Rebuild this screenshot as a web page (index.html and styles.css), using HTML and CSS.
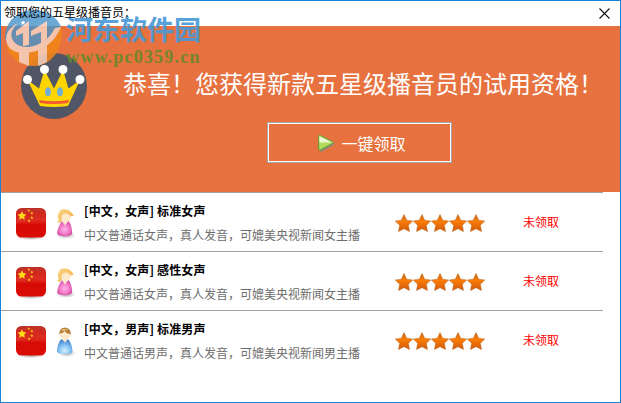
FILE: index.html
```
<!DOCTYPE html>
<html lang="zh-CN">
<head>
  <meta charset="UTF-8">
  <title>领取您的五星级播音员</title>
  <link rel="stylesheet" href="styles.css">
</head>
<body>
  <!-- shared icons -->
  <svg class="defs" width="0" height="0">
    <defs>
      <linearGradient id="red" x1="0" y1="0" x2="0" y2="1">
        <stop offset="0" stop-color="#b82a20"/><stop offset=".2" stop-color="#d01a12"/><stop offset=".48" stop-color="#de2318"/><stop offset=".56" stop-color="#d60b05"/><stop offset="1" stop-color="#dc0c06"/>
      </linearGradient>
      <linearGradient id="orange" x1="0" y1="0" x2="0" y2="1">
        <stop offset="0" stop-color="#c96510"/><stop offset=".4" stop-color="#fb7c07"/><stop offset="1" stop-color="#d0580a"/>
      </linearGradient>
      <radialGradient id="pink" cx=".5" cy=".55" r=".6">
        <stop offset="0" stop-color="#ffb4ec"/><stop offset=".5" stop-color="#f27fcb"/><stop offset="1" stop-color="#cf3e9a"/>
      </radialGradient>
      <radialGradient id="blue" cx=".5" cy=".75" r=".7">
        <stop offset="0" stop-color="#d8f1ff"/><stop offset=".5" stop-color="#86c3f4"/><stop offset="1" stop-color="#4384ce"/>
      </radialGradient>
      <linearGradient id="hair" x1="0" y1="0" x2="1" y2="1">
        <stop offset="0" stop-color="#fbd98a"/><stop offset="1" stop-color="#f2aa45"/>
      </linearGradient>
      <radialGradient id="shade">
        <stop offset="0" stop-color="#777" stop-opacity=".7"/><stop offset="1" stop-color="#999" stop-opacity="0"/>
      </radialGradient>
      <path id="star" d="M9 .5 11.7 6.2 17.7 7 13.4 11.3 14.5 17.6 9 14.7 3.5 17.6 4.6 11.3.3 7 6.3 6.2Z"/>
    </defs>
    <symbol id="flag" viewBox="0 0 32 34">
      <ellipse cx="16" cy="30.6" rx="14" ry="2.6" fill="url(#shade)"/>
      <rect x="1" y="1" width="30" height="29.5" rx="5.5" fill="url(#red)"/>
      <path d="M1.5 16C10 14 20 13 30.5 14V7Q30.500 1.500 25 1.500H7Q1.500 1.500 1.500 7Z" fill="#fff" opacity=".06"/>
      <use href="#star" transform="translate(2.500 4) scale(.5)" fill="#ffdb16"/>
      <g fill="#fbbd12">
        <use href="#star" transform="translate(12.300 2) scale(.16)"/>
        <use href="#star" transform="translate(15.300 4.500) scale(.17)"/>
        <use href="#star" transform="translate(15.300 9) scale(.17)"/>
        <use href="#star" transform="translate(12.500 12.200) scale(.18)"/>
      </g>
    </symbol>
    <symbol id="girl" viewBox="0 0 22 32">
      <ellipse cx="12" cy="27.500" rx="10" ry="3.500" fill="url(#shade)"/>
      <path d="M8 13C5 17 3 22 3.200 25.500 4 29.200 17 29.200 18.200 25.500 18.200 21 17 16 14.500 13Z" fill="url(#pink)"/>
      <path d="M7.500 12.500 11 17.500 14.700 12.500Z" fill="#ffe8cf"/>
      <ellipse cx="11.700" cy="8.500" rx="5.300" ry="5.500" fill="#ffe9cc"/>
      <path d="M6.500 2Q13-.5 17.500 4.500L20 7.500 16.500 8.500Q14 4.500 9.500 6 6.500 8 8 12L6 15 3 14Q6 12 4 10 3 6 6.500 2Z" fill="url(#hair)"/>
    </symbol>
    <symbol id="boy" viewBox="0 0 22 32">
      <ellipse cx="13" cy="27.500" rx="9" ry="3.500" fill="url(#shade)"/>
      <path d="M7.500 13Q11 16 14 13C17 16 18.500 22 18.500 25.500 17 29.200 4.500 29.200 3 25.500 3 21 5 15 7.500 13Z" fill="url(#blue)"/>
      <path d="M7.700 12.500 11 16.500 14.200 12.500Z" fill="#ffe8cf"/>
      <ellipse cx="11" cy="8.500" rx="5" ry="5.300" fill="#ffe9cc"/>
      <path d="M5.300 7Q6 1.600 11 1.500 17.300 1.800 17 10L16 7.500Q12.500 8.500 11 5 9 7 6 7.500L5.500 9Z" fill="#b07b32"/>
      <path d="M7 4Q11 1.500 15 4 11 3.500 9 5.500Z" fill="#dfb86e"/>
    </symbol>
    <symbol id="stars" viewBox="0 0 90 18">
      <g fill="url(#orange)" stroke="#b96a25" stroke-width=".5">
        <use href="#star"/>
        <use href="#star" x="18"/>
        <use href="#star" x="36"/>
        <use href="#star" x="54"/>
        <use href="#star" x="72"/>
      </g>
    </symbol>
  </svg>

  <div class="window">
    <header class="titlebar">
      <span class="caption">领取您的五星级播音员：</span>
      <svg class="close" width="11" height="11" viewBox="0 0 11 11"><path d="M.5.5 10.500 10.500M10.500.5.5 10.500" stroke="#111" stroke-width="1.100"/></svg>
    </header>

    <section class="banner">
      <svg class="crown" width="66" height="66" viewBox="0 0 66 66">
        <circle cx="33" cy="33" r="33" fill="#505665"/>
        <path d="M6.500 27 18 35.500 23.500 17 33 35.500 42 17 47.500 35.500 59 27 47 53Q33 55 19 53Z" fill="#ffd500"/>
        <path d="M18 47Q33 49.500 48 47L47 50Q33 52 19 50Z" fill="#f0582f"/>
        <g fill="#fff"><circle cx="6.500" cy="26.500" r="4.500"/><circle cx="23.500" cy="16.500" r="4.500"/><circle cx="42" cy="16.500" r="4.500"/><circle cx="59" cy="26.500" r="4.500"/></g>
        <g fill="#70afd5"><ellipse cx="27" cy="38.700" rx="2.900" ry="4.500"/><ellipse cx="39" cy="38.700" rx="2.900" ry="4.500"/></g>
      </svg>
      <div class="offer">
        <h1>恭喜！您获得新款五星级播音员的试用资格！</h1>
        <button class="claim">
          <svg width="18" height="18" viewBox="0 0 18 18">
            <path d="M2.500 2.500Q2.500.8 4 1.400L16 7.800Q17.500 9 16 10.200L4 16.900Q2.500 17.500 2.500 16Z" fill="#8b8d77" transform="translate(.5 .8)"/>
            <path d="M1.700 2.300Q1.700.7 3.200 1.400L15.300 7.600Q16.800 8.500 15.300 9.500L3.200 15.900Q1.700 16.500 1.700 15Z" fill="#b4dc5b" stroke="#659b31"/>
            <path d="M2.400 2.200 15 8.400H2.400Z" fill="#edf6d4"/>
          </svg>
          <span>一键领取</span>
        </button>
      </div>
    </section>

    <ul class="voices">
      <li class="voice">
        <svg class="flag" width="32" height="34"><use href="#flag"/></svg>
        <svg class="person" width="22" height="32"><use href="#girl"/></svg>
        <div class="info"><b>[中文，女声] 标准女声</b><p>中文普通话女声，真人发音，可媲美央视新闻女主播</p></div>
        <svg class="stars" width="90" height="18"><use href="#stars"/></svg>
        <span class="status">未领取</span>
      </li>
      <li class="voice">
        <svg class="flag" width="32" height="34"><use href="#flag"/></svg>
        <svg class="person" width="22" height="32"><use href="#girl"/></svg>
        <div class="info"><b>[中文，女声] 感性女声</b><p>中文普通话女声，真人发音，可媲美央视新闻女主播</p></div>
        <svg class="stars" width="90" height="18"><use href="#stars"/></svg>
        <span class="status">未领取</span>
      </li>
      <li class="voice">
        <svg class="flag" width="32" height="34"><use href="#flag"/></svg>
        <svg class="person" width="22" height="32"><use href="#boy"/></svg>
        <div class="info"><b>[中文，男声] 标准男声</b><p>中文普通话男声，真人发音，可媲美央视新闻男主播</p></div>
        <svg class="stars" width="90" height="18"><use href="#stars"/></svg>
        <span class="status">未领取</span>
      </li>
    </ul>

    <div class="watermark">
      <svg width="58" height="58" viewBox="0 0 58 58">
        <path d="M0 29C0 12 13 1 29 1 42 1 53 9 56 18L42 38 10 40Q1 36 0 29Z" fill="#4a95cb" opacity=".9"/>
        <path d="M56 18C60 38 47 57 29 57 15 57 4 49 1 36L14 42Q40 42 56 18Z" fill="#f08519"/>
        <path d="M11 22 24 12V36L18 37V24L11 27ZM26 22 42 12V30L36 35V23L26 27ZM14 42 24 43V57L14 53ZM33 41 42 35V53L33 57Z" fill="#f7cdb9"/>
        <path d="M13 14Q4 22 7 30 12 39 24 38 42 35 50 19L56 18Q46 42 20 44 2 44 1 30 1 20 13 14Z" fill="#f7cdb9"/>
        <use href="#star" transform="translate(15.500 11) scale(.28)" fill="#fff"/>
      </svg>
      <div class="site">
        <strong>河东软件园</strong>
        <em>www.pc0359.cn</em>
      </div>
    </div>
  </div>
</body>
</html>
```
FILE: styles.css
```
* {
  box-sizing: border-box;
}
body {
  margin: 0;
  font: 12px/16px "Noto Sans CJK SC", sans-serif;
  color: #000;
}
.defs {
  position: absolute;
}
.window {
  position: relative;
  width: 621px;
  height: 403px;
  border: 1px solid #1883d7;
  background: #fff;
  overflow: hidden;
}
.titlebar {
  display: flex;
  justify-content: space-between;
  height: 25px;
  padding: 3px 10px 0 3px;
}
.caption {
  position: relative;
  z-index: 1;
}
.close {
  margin-top: 4px;
}
.banner {
  display: flex;
  height: 166px;
  padding: 27px 0 0 20px;
  background: #e7723f;
}
.offer {
  margin-left: 36px;
}
h1 {
  margin: 12px 0 0;
  font-size: 24px;
  line-height: 36px;
  font-weight: 400;
  color: #fff;
  white-space: nowrap;
}
.claim {
  display: flex;
  align-items: center;
  justify-content: center;
  gap: 6px;
  width: 185px;
  height: 41px;
  margin: 21px 0 0 144px;
  padding: 0 0 0 4px;
  border: 1px solid #a5a5a5;
  box-shadow: inset 0 0 0 1px #fff;
  background: none;
  font: 400 16px/24px "Noto Sans CJK SC", sans-serif;
  color: #fff;
}
.voices {
  width: 602px;
  margin: 0;
  padding: 0;
  list-style: none;
}
.voice {
  display: flex;
  height: 59px;
  padding-left: 14px;
  border-top: 1px solid #a0a0a0;
}
.voice > * {
  flex-shrink: 0;
}
.flag {
  margin-top: 14px;
}
.person {
  margin: 15px 0 0 7px;
}
.info {
  width: 319px;
  padding: 10px 0 0 8px;
}
.info b {
  display: block;
  letter-spacing: .15px;
}
.info p {
  margin: 8px 0 0;
  color: #6d6d6d;
}
.stars {
  margin-top: 21px;
}
.status {
  margin: 21px 0 0 38px;
  color: #f00;
}
.watermark {
  position: absolute;
  left: 4px;
  top: 8px;
  display: flex;
  opacity: .9;
}
.site {
  margin-left: 3px;
}
.site strong {
  display: block;
  margin-top: 4px;
  font-size: 27px;
  line-height: 32px;
  color: #4799d9;
}
.site em {
  display: block;
  margin-top: 1px;
  font: bold 18px/22px "Liberation Serif", serif;
  letter-spacing: 1.2px;
  color: #68882a;
}
```
